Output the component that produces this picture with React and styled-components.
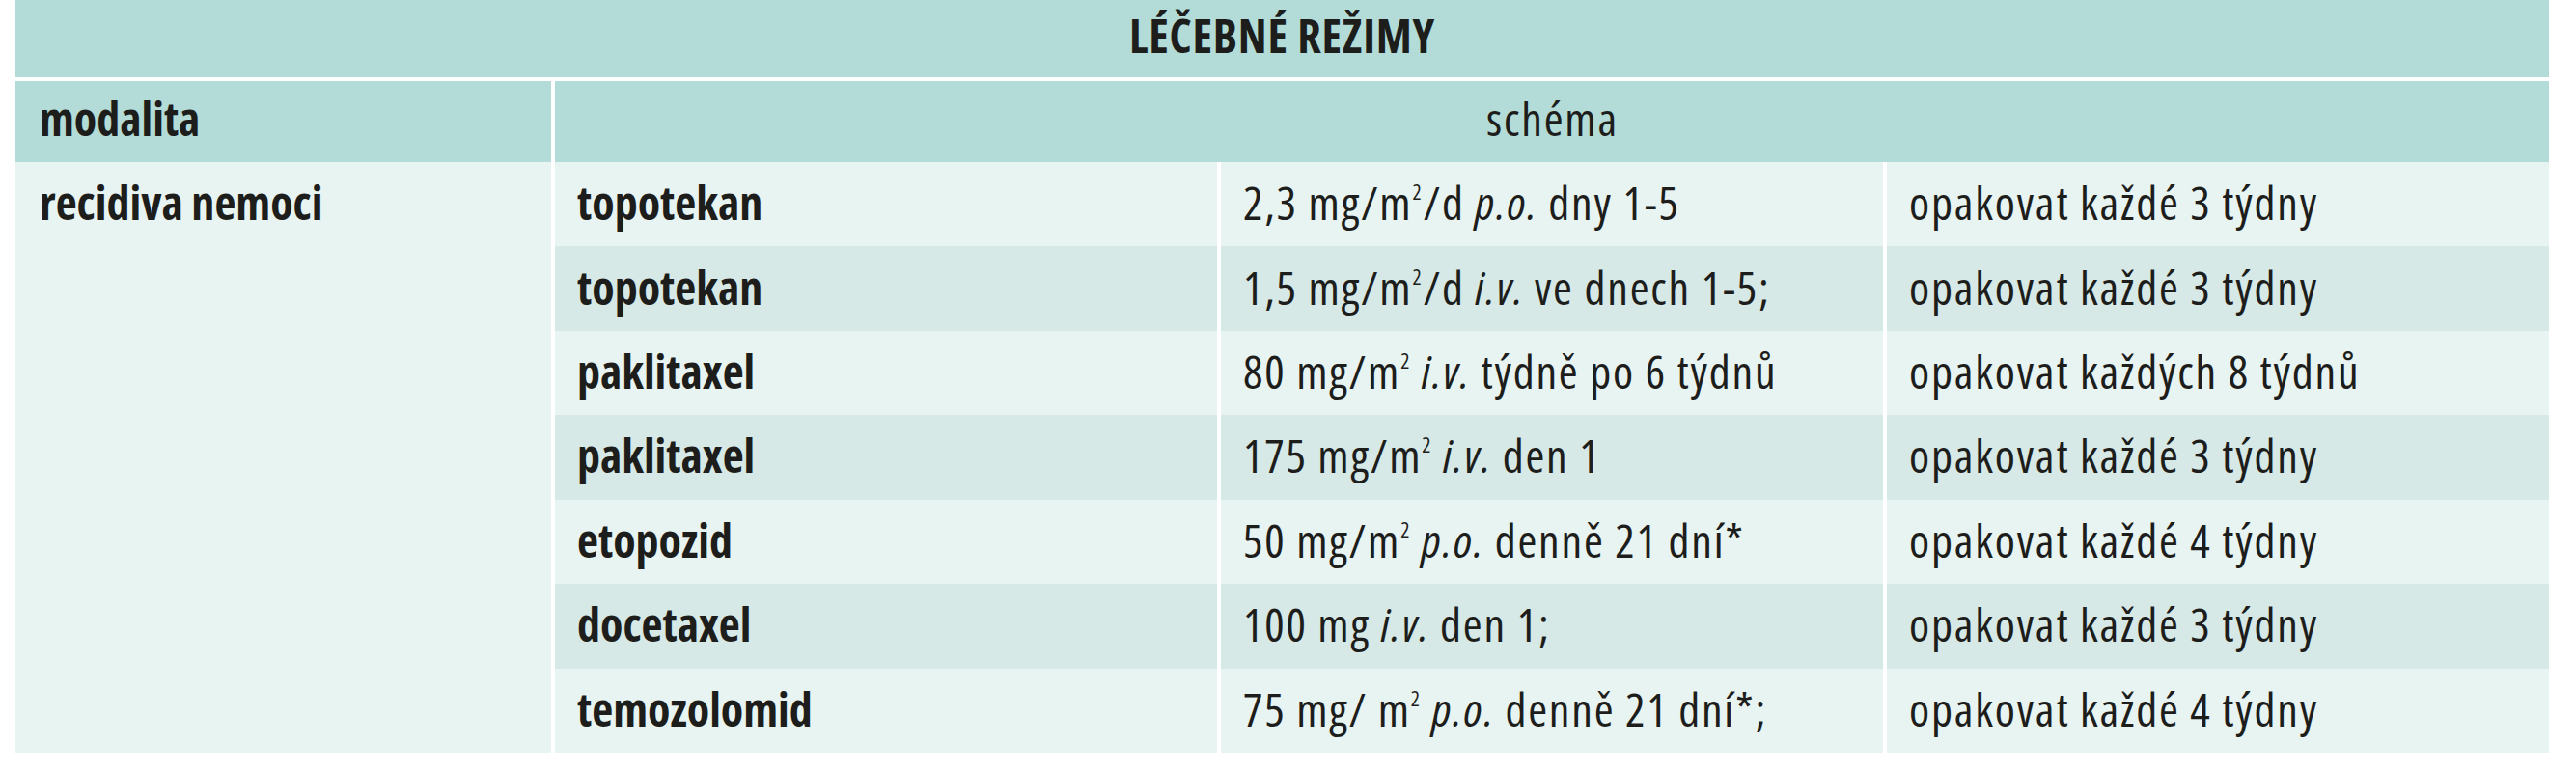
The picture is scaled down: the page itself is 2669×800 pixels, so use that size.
import styled, { createGlobalStyle } from 'styled-components'

const GlobalStyle = createGlobalStyle`
  body {
    margin: 0;
    background: #ffffff;
  }
`

const regimens = [
    { drug: 'topotekan', dose: <>2,3 mg/m<sup>2</sup>/d <i>p.o.</i> dny 1-5</>, repeat: 'opakovat každé 3 týdny' },
    { drug: 'topotekan', dose: <>1,5 mg/m<sup>2</sup>/d <i>i.v.</i> ve dnech 1-5;</>, repeat: 'opakovat každé 3 týdny' },
    { drug: 'paklitaxel', dose: <>80 mg/m<sup>2</sup> <i>i.v.</i> týdně po 6 týdnů</>, repeat: 'opakovat každých 8 týdnů' },
    { drug: 'paklitaxel', dose: <>175 mg/m<sup>2</sup> <i>i.v.</i> den 1</>, repeat: 'opakovat každé 3 týdny' },
    { drug: 'etopozid', dose: <>50 mg/m<sup>2</sup> <i>p.o.</i> denně 21 dní*</>, repeat: 'opakovat každé 4 týdny' },
    { drug: 'docetaxel', dose: <>100 mg <i>i.v.</i> den 1;</>, repeat: 'opakovat každé 3 týdny' },
    { drug: 'temozolomid', dose: <>75 mg/ m<sup>2</sup> <i>p.o.</i> denně 21 dní*;</>, repeat: 'opakovat každé 4 týdny' },
]

export default function App() {
    return <>
        <GlobalStyle />
        <Table>
            <Title><span>LÉČEBNÉ REŽIMY</span></Title>
            <HeadCell><span>modalita</span></HeadCell>
            <HeadCell $span={3} $center $regular><span>schéma</span></HeadCell>
            <ModalityCell>recidiva nemoci</ModalityCell>
            {regimens.map((value, i) => {
                const shade = i % 2 === 1
                return <Row key={i}>
                    <Cell $shade={shade} $bold><span>{value.drug}</span></Cell>
                    <Cell $shade={shade}><span>{value.dose}</span></Cell>
                    <Cell $shade={shade}><span>{value.repeat}</span></Cell>
                </Row>
            })}
        </Table>
    </>
}

const Table = styled.div`
    display: grid;
    grid-template-columns: 555px repeat(3, 1fr);
    grid-template-rows: 84px 84px repeat(7, 87.43px);
    column-gap: 4px;
    width: 2625px;
    margin-left: 16px;
    font-family: "Open Sans", "Liberation Sans", sans-serif;
    font-stretch: 75%;
    font-size: 48px;
    color: #1d1d1b;

    sup {
        font-size: 0.45em;
        line-height: 0;
        vertical-align: 0.95em;
    }
`

const Title = styled.div`
    grid-column: 1 / -1;
    height: 80px;
    display: flex;
    align-items: center;
    justify-content: center;
    padding-bottom: 7px;
    box-sizing: border-box;
    background: #b3dbd7;
    font-weight: 700;
    letter-spacing: 0.8px;
`

const HeadCell = styled.div`
    grid-column: span ${p => p.$span || 1};
    display: flex;
    align-items: center;
    justify-content: ${p => p.$center ? 'center' : 'flex-start'};
    padding: 0 24px 8px 25px;
    background: #b3dbd7;
    font-weight: ${p => p.$regular ? 400 : 700};
    letter-spacing: ${p => p.$regular ? '1.8px' : '0'};
`

const ModalityCell = styled.div`
    grid-row: span 7;
    padding: 9px 25px;
    background: #e8f4f2;
    font-weight: 700;
`

const Row = styled.div`
    display: contents;
`

const Cell = styled.div`
    display: flex;
    align-items: center;
    padding: 0 23px 4px;
    white-space: nowrap;
    background: ${p => p.$shade ? '#d6e9e6' : '#e8f4f2'};
    font-weight: ${p => p.$bold ? 700 : 400};
    letter-spacing: ${p => p.$bold ? '0' : '1.8px'};
`
